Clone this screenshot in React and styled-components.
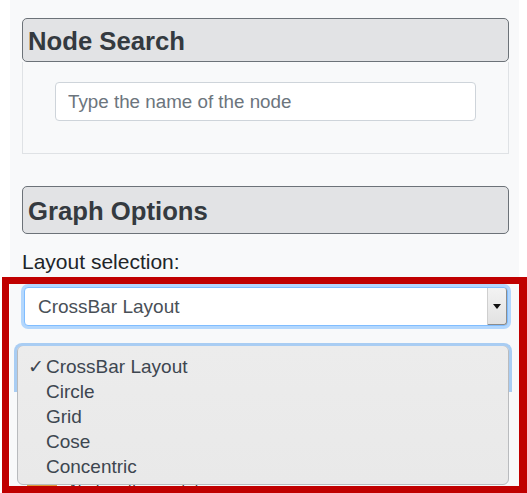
import React from 'react';
import styled, { createGlobalStyle } from 'styled-components';

const GlobalStyle = createGlobalStyle`
    html, body {
        margin: 0;
        background: #fff;
    }

    body {
        font-family: "Liberation Sans", Arial, sans-serif;
        color: #212529;
    }
`;

const Page = styled.div`
    position: relative;
    width: 527px;
    height: 493px;
    overflow: hidden;
`;

const Sidebar = styled.aside`
    margin-left: 10px;
    width: 509px;
    height: 493px;
    box-sizing: border-box;
    padding: 18px 10px 0 12px;
    background: #f8f9fa;
`;

const CardHeader = styled.div`
    display: flex;
    align-items: center;
    height: ${({ tall }) => (tall ? '48px' : '44px')};
    box-sizing: border-box;
    padding: 2px 5px 0;
    border: 1px solid #6c7278;
    border-radius: 5px;
    background: #e2e3e5;

    h3 {
        margin: 0;
        font-size: 25.7px;
        font-weight: 700;
        color: #343a40;
    }
`;

const CardBody = styled.div`
    padding: 20px 32px 32px;
    border: 1px solid #dfe2e5;
    border-top: none;
    background: #f8f9fa;
`;

const SearchInput = styled.input`
    display: block;
    width: 100%;
    height: 39px;
    box-sizing: border-box;
    padding: 0 12px;
    border: 1px solid #ced4da;
    border-radius: 4px;
    background: #fff;
    font-family: inherit;
    font-size: 18.8px;
    color: #495057;

    &::placeholder {
        color: #6c757d;
    }
`;

const Section = styled.section`
    margin-top: 32px;
`;

const Label = styled.label`
    display: block;
    margin-top: 15px;
    font-size: 21px;
    line-height: 25px;
    color: #212529;
`;

const SelectArea = styled.div`
    position: relative;
    margin-top: 13px;
`;

const SelectBox = styled.div`
    display: flex;
    align-items: stretch;
    height: 37px;
    margin: 0 1px 0 2px;
    border: 1px solid #80bdff;
    border-radius: 4px;
    background: #fff;
    box-shadow: 0 0 0 3px #b3d7fd;
`;

const SelectValue = styled.span`
    flex: 1;
    display: flex;
    align-items: center;
    padding-left: 13px;
    font-size: 19px;
    color: #495057;
`;

const ArrowButton = styled.span`
    display: flex;
    align-items: center;
    justify-content: center;
    width: 18px;
    border-left: 1px solid #cfcfcf;
    border-right: 1px solid #8c8c8c;
    border-bottom: 1px solid #8c8c8c;
    border-radius: 0 3px 3px 0;
    background: linear-gradient(#f3f3f3, #e2e2e2);
`;

const Popup = styled.ul`
    position: absolute;
    top: 58px;
    left: -5px;
    width: 492px;
    height: 140px;
    box-sizing: border-box;
    margin: 0;
    padding: 8px 0 0;
    list-style: none;
    border: 1px solid #b9bbbe;
    border-radius: 6px;
    background: linear-gradient(#ececec, #e9e9e9);
    z-index: 2;

    &::before {
        content: '';
        position: absolute;
        top: -3px;
        left: -4px;
        right: -4px;
        height: 46px;
        border: 3px solid #a9cdf3;
        border-bottom: none;
        border-radius: 8px 8px 0 0;
        z-index: -1;
    }
`;

const Option = styled.li`
    display: flex;
    align-items: center;
    height: 25px;
    padding-left: 10px;
    font-size: 19px;
    color: #3d4650;

    span {
        width: 18px;
    }
`;

const Legend = styled.div`
    display: flex;
    align-items: flex-start;
    gap: 13px;
    margin-top: 156px;
    padding-left: 5px;
    font-size: 16px;
    line-height: 16px;
    color: #343a40;
`;

const Swatch = styled.span`
    width: 30px;
    height: 14px;
    background: #e39a3b;
`;

const Highlight = styled.div`
    position: absolute;
    top: 277px;
    left: 2px;
    width: 525px;
    height: 216px;
    box-sizing: border-box;
    border: 7px solid #c00000;
    border-right-width: 8px;
    pointer-events: none;
    z-index: 5;
`;

const layouts = ['CrossBar Layout', 'Circle', 'Grid', 'Cose', 'Concentric'];

const App = () => {
    return (
        <Page>
            <GlobalStyle />
            <Sidebar>
                <CardHeader>
                    <h3>Node Search</h3>
                </CardHeader>
                <CardBody>
                    <SearchInput placeholder="Type the name of the node" />
                </CardBody>

                <Section>
                    <CardHeader tall>
                        <h3>Graph Options</h3>
                    </CardHeader>
                    <Label>Layout selection:</Label>
                    <SelectArea>
                        <SelectBox>
                            <SelectValue>CrossBar Layout</SelectValue>
                            <ArrowButton>
                                <svg width="8" height="5" viewBox="0 0 8 5">
                                    <path d="M0 0h8L4 5z" fill="#111" />
                                </svg>
                            </ArrowButton>
                        </SelectBox>
                        <Popup>
                            {layouts.map((name, i) => (
                                <Option key={name}>
                                    <span>{i === 0 ? '✓' : ''}</span>
                                    {name}
                                </Option>
                            ))}
                        </Popup>
                    </SelectArea>
                    <Legend>
                        <Swatch />
                        Node with annotations
                    </Legend>
                </Section>
            </Sidebar>
            <Highlight />
        </Page>
    );
};

export default App;
